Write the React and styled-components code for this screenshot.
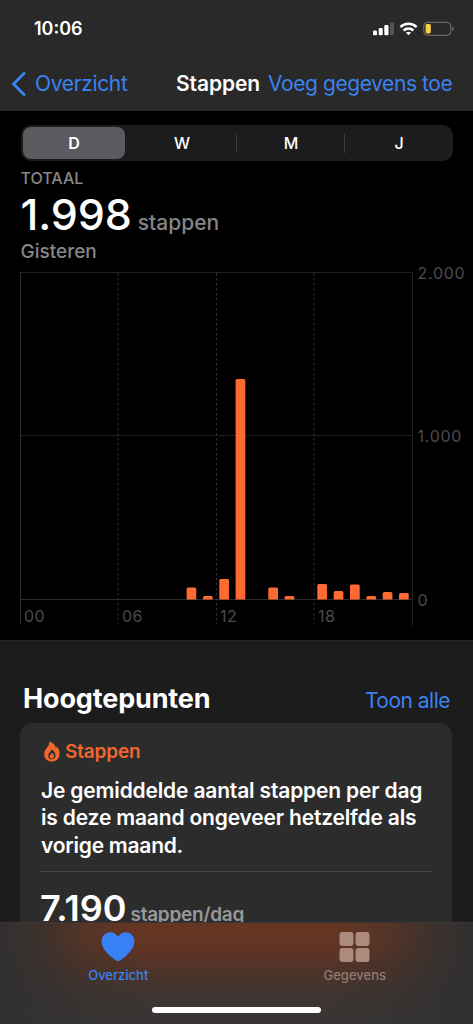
import React from 'react'
import styled, { createGlobalStyle } from 'styled-components'

const BLUE = '#3b82f0'
const ORANGE = '#ff6a33'
const GREY = '#868688'

const GlobalStyle = createGlobalStyle`
  * {
    box-sizing: border-box;
  }

  body {
    margin: 0;
    background: #000;
    font-family: Inter, 'Liberation Sans', sans-serif;
    -webkit-font-smoothing: antialiased;
  }
`

const Screen = styled.div`
  display: flex;
  flex-direction: column;
  width: 473px;
  height: 1024px;
  overflow: hidden;
  background: #000;
  color: #fff;
`

const Text = styled.span`
  font-size: ${p => p.$size}px;
  font-weight: ${p => p.$weight || 400};
  line-height: ${p => p.$line || p.$size}px;
  letter-spacing: ${p => p.$spacing || 0}px;
  color: ${p => p.$color || '#fff'};
  white-space: nowrap;
`

const Header = styled.header`
  flex: none;
  height: 111px;
  background: #292929;
`

const StatusBar = styled.div`
  display: flex;
  align-items: center;
  justify-content: space-between;
  height: 57px;
  padding: 0 19px 0 34px;
`

const NavBar = styled.nav`
  display: grid;
  grid-template-columns: 165px 92px 1fr;
  align-items: center;
  height: 53px;
  padding-left: 11px;
`

const BackLink = styled.div`
  display: flex;
  align-items: center;
  gap: 9px;
`

const Summary = styled.section`
  flex: none;
  display: flex;
  flex-direction: column;
  height: 529px;
  padding-top: 14px;
`

const Segments = styled.div`
  display: grid;
  grid-template-columns: 104px 110px 1fr 1fr;
  flex: none;
  height: 36px;
  margin: 0 20px 7px 21px;
  padding: 2px 0 2px 2px;
  border-radius: 10px;
  background: #1c1c1e;
`

const Segment = styled.div`
  display: flex;
  align-items: center;
  justify-content: center;
  margin-right: ${p => (p.$active ? '2px' : 0)};
  border-radius: ${p => (p.$active ? '8px' : 0)};
  background: ${p =>
    p.$active
      ? '#5b5b5f'
      : p.$divided
        ? 'linear-gradient(#3c3c3f, #3c3c3f) right center / 1px 19px no-repeat'
        : 'none'};
`

const Totals = styled.div`
  display: flex;
  flex-direction: column;
  flex: none;
  height: 94px;
  padding-left: 20.5px;
`

const Amount = styled.div`
  display: flex;
  align-items: baseline;
  gap: ${p => p.$gap}px;
  margin: ${p => p.$margin};
`

const Chart = styled.svg`
  display: block;
  flex: none;
  font-family: Inter, 'Liberation Sans', sans-serif;
  font-size: 16px;
  fill: #4b4b4d;
`

const Highlights = styled.section`
  flex: none;
  height: 282px;
  overflow: hidden;
  padding: 41px 21px 0 20px;
  border-top: 1px solid #242425;
  background: #1c1c1c;
`

const HighlightsHead = styled.div`
  display: flex;
  align-items: baseline;
  justify-content: space-between;
  height: 34px;
  margin-bottom: 7px;
  padding: 0 2px 0 3px;
`

const Card = styled.article`
  height: 260px;
  padding: 16px 20px 0;
  border-radius: 13px;
  background: #2c2c2d;
`

const CardTitle = styled.div`
  display: flex;
  align-items: center;
  gap: 5px;
  height: 24px;
  padding-left: 4px;
`

const CardText = styled.p`
  display: flex;
  flex-direction: column;
  margin: 13.5px 0 12px;
  padding-left: 1px;
`

const Divider = styled.div`
  height: 1px;
  background: #444446;
`

const TabBar = styled.footer`
  flex: none;
  display: flex;
  flex-direction: column;
  align-items: center;
  height: 102px;
  border-top: 1px solid #3d3533;
  background:
    linear-gradient(
      90deg,
      #313030 0,
      rgba(49, 48, 48, 0.8) 8%,
      rgba(49, 48, 48, 0.3) 18%,
      rgba(49, 48, 48, 0) 30%,
      rgba(49, 48, 48, 0) 70%,
      rgba(49, 48, 48, 0.3) 82%,
      rgba(49, 48, 48, 0.85) 93%,
      #303030 100%
    ),
    linear-gradient(#663622 0, #623523 22%, #503328 46%, #3f3430 68%, #373535 100%);
`

const Tabs = styled.div`
  display: grid;
  grid-template-columns: 1fr 1fr;
  width: 100%;
  height: 84px;
  padding-top: 9px;
`

const Tab = styled.div`
  display: flex;
  flex-direction: column;
  align-items: center;
  gap: 5px;
`

const HomeIndicator = styled.div`
  width: 169px;
  height: 6px;
  border-radius: 3px;
  background: #fff;
`

// [hour, bar height in px]
const hours = [
  [10, 12],
  [11, 3.5],
  [12, 20.5],
  [13, 220.5],
  [15, 12],
  [16, 3.5],
  [18, 15.5],
  [19, 8.5],
  [20, 15],
  [21, 3.5],
  [22, 7.5],
  [23, 6.5],
]

const barPath = (x, h) =>
  `M${x} 337.5v${-(h - 1.5)}q0-1.5 1.5-1.5h6.7q1.5 0 1.5 1.5v${h - 1.5}z`

const StatusIcons = () => (
  <svg width="82" height="16" viewBox="372 20.5 82 16">
    <g fill="#fff">
      <rect x="373" y="30" width="4" height="4.8" rx="1" />
      <rect x="378.7" y="27.5" width="4" height="7.3" rx="1" />
      <rect x="384.3" y="24.6" width="4.2" height="10.2" rx="1" />
      <rect x="390" y="21.7" width="4" height="13.1" rx="1" fill="#535353" />
    </g>
    <g fill="none" stroke="#fff" strokeWidth="2.5">
      <path d="M400.4 26.6a11.6 11.6 0 0 1 16.2 0" />
      <path d="M403.6 30a7 7 0 0 1 9.8 0" />
    </g>
    <path d="M408.5 34.8l-2.5-2.6q2.5-2 5 0z" fill="#fff" />
    <rect
      x="423.8"
      y="21.8"
      width="27"
      height="13"
      rx="3.6"
      fill="none"
      stroke="#777"
    />
    <rect x="425.6" y="23.6" width="5.2" height="9.4" rx="1.4" fill="#f7d148" />
    <path d="M452.2 26.2q1.5.6 1.5 2.1t-1.5 2.1z" fill="#777" />
  </svg>
)

const Flame = () => (
  <svg width="16" height="21" viewBox="0 0 16 21">
    <path
      fillRule="evenodd"
      fill="#f2662c"
      d="M5 .4c4 .9 6.3 3.3 6.900 6.500.5-.5.7-1 .8-1.700 2 2.300 2.900 4.900 2.900 7.500 0 4.700-3.200 7.800-7.800 7.800S.3 17.500.3 13.200c0-2.900 1.200-4.700 2.800-6.600C4.600 4.800 5.500 3 5 .4zM7.200 8.300c.3 2-2.900 3.600-2.900 6.600 0 2.100 1.400 3.400 3.500 3.400s3.700-1.300 3.700-3.500c0-2.900-1.900-5.300-4.300-6.500z"
    />
    <path
      fill="#f2662c"
      d="M7.700 11.700c1.500.9 2.300 2 2.300 3.500 0 1.400-.8 2.300-2.100 2.300s-2.200-.8-2.200-2.100c0-1.500 1.700-2.100 2-3.700z"
    />
  </svg>
)

const ranges = ['D', 'W', 'M', 'J']

const App = () => (
  <React.Fragment>
    <GlobalStyle />
    <Screen>
      <Header>
        <StatusBar>
          <Text $size={18} $weight={600}>
            10:06
          </Text>
          <StatusIcons />
        </StatusBar>
        <NavBar>
          <BackLink>
            <svg width="15" height="24" viewBox="0 0 15 24">
              <path
                d="M13 1.500L2.500 12 13 22.500"
                fill="none"
                stroke={BLUE}
                strokeWidth="3"
                strokeLinecap="round"
                strokeLinejoin="round"
              />
            </svg>
            <Text $size={21} $line={26} $spacing={-0.35} $color={BLUE}>
              Overzicht
            </Text>
          </BackLink>
          <Text $size={21} $line={26} $weight={600} $spacing={-0.1}>
            Stappen
          </Text>
          <Text $size={21} $line={26} $spacing={-0.42} $color={BLUE}>
            Voeg gegevens toe
          </Text>
        </NavBar>
      </Header>

      <Summary>
        <Segments>
          {ranges.map((range, i) => (
            <Segment key={range} $active={i === 0} $divided={i === 1 || i === 2}>
              <Text $size={16} $weight={i === 0 ? 600 : 500}>
                {range}
              </Text>
            </Segment>
          ))}
        </Segments>
        <Totals>
          <Text $size={16} $line={20} $weight={500} $color={GREY}>
            TOTAAL
          </Text>
          <Amount $gap={6} $margin="5px 0 6px">
            <Text $size={43} $line={42} $weight={450} $spacing={-0.1}>
              1.998
            </Text>
            <Text $size={21} $weight={500} $color={GREY}>
              stappen
            </Text>
          </Amount>
          <Text $size={19} $line={22} $weight={500} $color={GREY}>
            Gisteren
          </Text>
        </Totals>
        <Chart width="473" height="378" viewBox="0 0 473 378">
          <g stroke="#1f1f21">
            <path d="M20 10.500H412.500" />
            <path d="M20 173.500H412.500" />
            <path d="M412.500 10V364" />
            <path d="M20.500 10V362M20 337.500H412.500" stroke="#2d2d2f" />
          </g>
          <path
            d="M118 11V362M216.500 11V362M314 11V362"
            stroke="#303032"
            strokeDasharray="2.500 2.500"
          />
          {hours.map(([hour, height]) => (
            <path
              key={hour}
              d={barPath(23.2 + hour * 16.34, height)}
              fill={ORANGE}
            />
          ))}
          <g letterSpacing="0.7">
            <text x="417.600" y="17">2.000</text>
            <text x="417.600" y="180">1.000</text>
            <text x="417.600" y="344">0</text>
          </g>
          <g letterSpacing="0.4">
            <text x="24" y="360">00</text>
            <text x="122" y="360">06</text>
            <text x="220" y="360">12</text>
            <text x="318" y="360">18</text>
          </g>
        </Chart>
      </Summary>

      <Highlights>
        <HighlightsHead>
          <Text $size={27} $line={34} $weight={700} $spacing={-0.15}>
            Hoogtepunten
          </Text>
          <Text $size={21} $spacing={-0.5} $color={BLUE}>
            Toon alle
          </Text>
        </HighlightsHead>
        <Card>
          <CardTitle>
            <Flame />
            <Text $size={19} $weight={600} $spacing={-0.15} $color="#f2662c">
              Stappen
            </Text>
          </CardTitle>
          <CardText>
            <Text $size={21} $line={27.5} $weight={600} $spacing={-0.17}>
              Je gemiddelde aantal stappen per dag
            </Text>
            <Text $size={21} $line={27.5} $weight={600} $spacing={-0.18}>
              is deze maand ongeveer hetzelfde als
            </Text>
            <Text $size={21} $line={27.5} $weight={600} $spacing={-0.25}>
              vorige maand.
            </Text>
          </CardText>
          <Divider />
          <Amount $gap={4} $margin="18px 0 0">
            <Text $size={36} $weight={600}>
              7.190
            </Text>
            <Text $size={19} $weight={600} $spacing={-0.28} $color="#98989b">
              stappen/dag
            </Text>
          </Amount>
        </Card>
      </Highlights>

      <TabBar>
        <Tabs>
          <Tab>
            <svg width="34" height="30" viewBox="0 0 34 30">
              <path
                d="M17 29.300C15 29.300 .6 19.500 .6 9.600 .6 4.300 4.200 .3 9.200 .3c3.400 0 6.200 1.700 7.800 4.600C18.600 2 21.400.3 24.800.3c5 0 8.600 4 8.600 9.300C33.400 19.500 19 29.300 17 29.300z"
                fill="#3880f6"
              />
            </svg>
            <Text $size={13} $line={17} $weight={500} $color={BLUE}>
              Overzicht
            </Text>
          </Tab>
          <Tab>
            <svg width="31" height="30" viewBox="0 0 31 30" fill="#ac8a7d">
              <rect x="0.500" width="14" height="14" rx="3" />
              <rect x="16.500" width="14" height="14" rx="3" />
              <rect x="0.500" y="16" width="14" height="14" rx="3" />
              <rect x="16.500" y="16" width="14" height="14" rx="3" />
            </svg>
            <Text $size={13} $line={17} $weight={500} $color="#95796d">
              Gegevens
            </Text>
          </Tab>
        </Tabs>
        <HomeIndicator />
      </TabBar>
    </Screen>
  </React.Fragment>
)

export default App
